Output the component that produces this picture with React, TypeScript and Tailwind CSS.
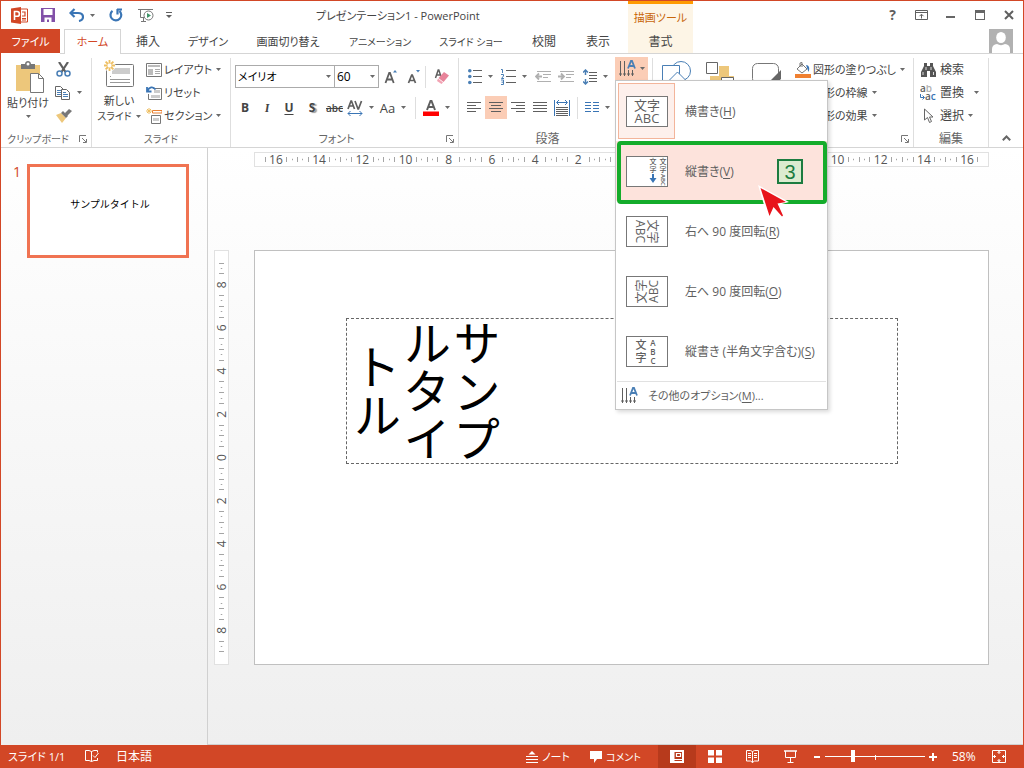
import React from 'react';

const INK = '#5f5f5f';
const BLUE = '#4a7fb5';

function Caret({ light = false }: { light?: boolean }) {
  return (
    <svg width="5" height="3" viewBox="0 0 5 3" className="shrink-0" aria-hidden="true">
      <path d="M0 0h5L2.500 3z" fill={light ? '#999' : '#6a6a6a'} />
    </svg>
  );
}

type ToolProps = { label: string; className?: string; children: React.ReactNode };

function Tool({ label, className = 'w-[22px]', children }: ToolProps) {
  return (
    <button type="button" aria-label={label} className={`flex h-[23px] shrink-0 items-center justify-center gap-1.5 ${className}`}>
      {children}
    </button>
  );
}

function Rule() {
  return <span className="h-[22px] w-px shrink-0 bg-[#dedede]" />;
}

type GroupProps = { title: string; titleSize?: string; launcher?: boolean; className: string; children: React.ReactNode };

function Group({ title, titleSize = 'text-xs', launcher = false, className, children }: GroupProps) {
  return (
    <section aria-label={title} className={`mt-1 flex shrink-0 flex-col border-r border-[#dedede] ${className}`}>
      <div className="flex h-[73px]">{children}</div>
      <div className="flex h-4 items-center">
        <span className={`flex-1 whitespace-nowrap text-center text-[#666] ${titleSize}`}>{title}</span>
        {launcher && (
          <button type="button" aria-label={`${title}の詳細`} className="flex w-4 justify-center">
            <svg width="8" height="8" viewBox="0 0 8 8" fill="none" stroke="#777">
              <path d="M.5 7V.5H7M3 3l4 4M7.500 4v3.500H4" />
            </svg>
          </button>
        )}
      </div>
    </section>
  );
}

type RowButtonProps = { icon: React.ReactNode; text: string; size?: string; caret?: boolean; gap?: string };

function RowButton({ icon, text, size = 'text-[11px]', caret = false, gap = 'gap-0.5' }: RowButtonProps) {
  return (
    <button type="button" className="flex h-[23px] items-center gap-1 whitespace-nowrap">
      <span className={`flex items-center ${gap}`}>
        <span className="flex w-4 justify-center">{icon}</span>
        <span className={size}>{text}</span>
      </span>
      {caret && <Caret />}
    </button>
  );
}

function Lines({ rows, width = 14, color = INK }: { rows: [number, number][]; width?: number; color?: string }) {
  return (
    <svg width={width} height="11" viewBox={`0 0 ${width} 11`} stroke={color}>
      {rows.map(([a, b], i) => (
        <path key={i} d={`M${a} ${i * 3 + 0.5}H${b}`} />
      ))}
    </svg>
  );
}

function TextDirectionIcon() {
  return (
    <svg width="17" height="17" viewBox="0 0 17 17" fill="none">
      <path d="M1.500 1v15M5.500 1v15M9.500 10v6M13.500 10v6" stroke={INK} />
      <path d="M0 14h3M4 14h3M8 14h3M12 14h3" stroke={INK} />
      <path d="M9 8.500L12 1h1l3 7.500M10.200 6h4.600" stroke={BLUE} strokeWidth="1.800" />
    </svg>
  );
}

function TitleBar() {
  return (
    <div className="flex h-7">
      <div className="flex w-[627px] shrink-0 items-center">
        <div className="flex w-[315px] shrink-0 items-center pl-2.5">
          <svg width="17" height="17" viewBox="0 0 17 17" className="mr-[13px]">
            <path d="M9 2h7.500v13H9z" fill="#fff" stroke="#d24726" />
            <path d="M0 1.500L10 0v17L0 15.500z" fill="#d24726" />
            <path d="M3.500 13V4.500H6a2.300 2.300 0 010 4.800H3.500" fill="none" stroke="#fff" strokeWidth="1.600" />
            <path d="M11 5h3v4h-3M11 11.500h4M11 13h4" fill="none" stroke="#d24726" strokeWidth="1.200" />
          </svg>
          <button type="button" aria-label="上書き保存" className="mr-3.5">
            <svg width="14" height="14" viewBox="0 0 14 14">
              <path d="M0 0h14v14H0z" fill="#8250a8" />
              <path d="M2.500 1h9v6h-9zM3.500 9.500h7V14H8v-2.500H6V14H3.500z" fill="#fff" />
            </svg>
          </button>
          <button type="button" aria-label="元に戻す" className="mr-3.5 flex items-center gap-1.5">
            <svg width="15" height="14" viewBox="0 0 15 14" fill="none" stroke="#3a75b5" strokeWidth="2.200">
              <path d="M5.500 1L1.500 5l4 4M2 5h7c3 0 5 1.500 5 4 0 2-1.500 3.500-4 4" />
            </svg>
            <Caret />
          </button>
          <button type="button" aria-label="やり直し" className="mr-[15px]">
            <svg width="14" height="14" viewBox="0 0 14 14" fill="none" stroke="#3a75b5" strokeWidth="2.200">
              <path d="M3.500 2.800A5.400 5.400 0 1010.500 3M8 1.500h5M8.500 1v5.500" />
            </svg>
          </button>
          <button type="button" aria-label="最初から開始" className="mr-3">
            <svg width="16" height="15" viewBox="0 0 16 15" fill="none" stroke="#777">
              <path d="M0 1.500h15M2.500 2v7.500H7M5.500 10v3M3 13.500h5" />
              <circle cx="10.500" cy="7.500" r="4.500" fill="#fff" />
              <path d="M9 5l4 2.500L9 10z" fill="#3f9468" stroke="none" />
            </svg>
          </button>
          <button type="button" aria-label="クイック アクセス ツール バーのカスタマイズ">
            <svg width="6" height="6" viewBox="0 0 6 6"><path d="M0 .5h6" stroke={INK} /><path d="M0 3h6L3 6z" fill={INK} /></svg>
          </button>
        </div>
        <h1 className="whitespace-nowrap pt-0.5 text-[11px] text-[#444]">プレゼンテーション1 - PowerPoint</h1>
      </div>
      <div className="flex w-[65px] shrink-0 items-center justify-center border-t-[3px] border-[#ff9a00] bg-[#fdf5e6] pt-0.5 text-[11px] text-[#c8660a]">描画ツール</div>
      <div className="flex flex-1 items-center justify-end">
        <button type="button" aria-label="ヘルプ" className="w-[29px] text-sm font-bold text-[#5f5f5f]">?</button>
        <button type="button" aria-label="リボンの表示オプション" className="flex w-[29px] justify-center">
          <svg width="13" height="11" viewBox="0 0 13 11" fill="none" stroke={INK}><path d="M.5.500h12v9H.5zM0 2.500h13M6.500 8.500V4.500M4.500 6.200l2-2 2 2" /></svg>
        </button>
        <button type="button" aria-label="最小化" className="flex w-[29px] justify-center"><span className="mt-1 h-0.5 w-[9px] bg-[#666]" /></button>
        <button type="button" aria-label="最大化" className="flex w-[29px] justify-center"><span className="h-2.5 w-2.5 border border-t-[3px] border-[#666]" /></button>
        <button type="button" aria-label="閉じる" className="flex w-[29px] justify-center">
          <svg width="10" height="10" viewBox="0 0 10 10" stroke={INK} strokeWidth="2"><path d="M1 1l8 8M9 1L1 9" /></svg>
        </button>
      </div>
    </div>
  );
}

function TabRow() {
  const tab = 'flex shrink-0 items-center justify-center whitespace-nowrap border-b border-[#d5d5d5] pt-0.5 text-[#444]';
  return (
    <nav className="flex h-[25px]">
      <button type="button" className="mb-px w-[59px] shrink-0 bg-[#d24726] pt-0.5 text-[11px] text-white">ファイル</button>
      <span className="w-1 shrink-0 border-b border-[#d5d5d5]" />
      <button type="button" className="w-[57px] shrink-0 border-x border-t border-[#d5d5d5] bg-white text-[11px] text-[#d24726]">ホーム</button>
      <button type="button" className={`${tab} w-[54px]`}>挿入</button>
      <button type="button" className={`${tab} w-[66px] text-[11px]`}>デザイン</button>
      <button type="button" className={`${tab} w-[94px] text-[11px]`}>画面切り替え</button>
      <button type="button" className={`${tab} w-[90px] text-[10px]`}>アニメーション</button>
      <button type="button" className={`${tab} w-[92px] text-[10px]`}>スライド ショー</button>
      <button type="button" className={`${tab} w-[54px]`}>校閲</button>
      <button type="button" className={`${tab} w-[54px]`}>表示</button>
      <span className="w-[3px] shrink-0 border-b border-[#d5d5d5]" />
      <button type="button" className={`${tab} w-[65px] bg-[#fdf5e6]`}>書式</button>
      <div className="flex flex-1 items-end justify-end border-b border-[#d5d5d5] pr-2.5">
        <svg width="24" height="24" viewBox="0 0 24 24">
          <path d="M0 0h24v24H0z" fill="#b1b1b1" />
          <ellipse cx="12" cy="8.500" rx="4.800" ry="5.500" fill="#fff" />
          <path d="M3 24v-4c0-3 2-4.500 5-5 2.500 1.500 5.500 1.500 8 0 3 .5 5 2 5 5v4z" fill="#fff" />
        </svg>
      </div>
    </nav>
  );
}

function ClipboardGroup() {
  return (
    <Group title="クリップボード" titleSize="text-[10px]" launcher className="w-[91px]">
      <button type="button" className="flex w-[54px] flex-col items-center pt-[3px]">
        <svg width="30" height="32" viewBox="0 0 30 32" className="ml-1">
          <path d="M1 4h24v26H1z" fill="#edc77b" />
          <path d="M6 3h4c0-4 6-4 6 0h4v5H6z" fill="#777" />
          <circle cx="13" cy="3" r="1.500" fill="#fff" />
          <path d="M15.500 12.500h8l5 5v14h-13z" fill="#fff" stroke="#777" />
          <path d="M23.500 12.500v5h5" fill="none" stroke="#777" />
        </svg>
        <span className="mt-0.5 text-[11px] leading-4">貼り付け</span>
        <span className="mt-1"><Caret /></span>
      </button>
      <div className="flex flex-col">
        <Tool label="切り取り" className="w-4">
          <svg width="15" height="15" viewBox="0 0 15 15" fill="none">
            <path d="M3 0l6.500 10M12 0L5.500 10" stroke={INK} strokeWidth="2.200" />
            <circle cx="3.500" cy="11.500" r="2.500" stroke={BLUE} strokeWidth="1.500" />
            <circle cx="11.500" cy="11.500" r="2.500" stroke={BLUE} strokeWidth="1.500" />
          </svg>
        </Tool>
        <Tool label="コピー" className="w-[27px]">
          <svg width="16" height="14" viewBox="0 0 16 14" fill="#fff" stroke="#666">
            <path d="M.5.500h5l3 3v7h-8z" /><path d="M2 4.500h4M2 6.500h4M2 8.500h4" stroke={BLUE} />
            <path d="M6.500 3.500h5l3 3v7h-8z" /><path d="M8 8.500h5M8 10.500h5M8 6.500h3" stroke={BLUE} />
          </svg>
          <Caret />
        </Tool>
        <Tool label="書式のコピー/貼り付け" className="w-[18px]">
          <svg width="16" height="14" viewBox="0 0 16 14">
            <path d="M0 6l5-2 5 5-4 5z" fill="#edc77b" /><path d="M5 4l2-2 5 5-2 2zM9 4l4-4 3 2-4.500 4.500z" fill="#777" />
          </svg>
        </Tool>
      </div>
    </Group>
  );
}

function Sparkle() {
  return <path d="M5.500 0v3.500M5.500 7.500V11M0 5.500h3.500M7.500 5.500H11M1.600 1.600L4 4M7 7l2.400 2.400M9.400 1.600L7 4M4 7L1.600 9.400" stroke="#eebf62" strokeWidth="1.800" />;
}

function SlideGroup() {
  return (
    <Group title="スライド" titleSize="text-[10px]" className="w-[139px]">
      <button type="button" className="flex w-[54px] flex-col items-center pt-0.5">
        <svg width="31" height="29" viewBox="0 0 31 29" fill="none">
          <rect x="2.500" y="4.500" width="27" height="22" rx="1" fill="#fff" stroke="#777" />
          <path d="M8 8h18v6H8z" fill="#ccc" /><path d="M6 19.500h20M6 22.500h20M6 16.500h1" stroke="#999" />
          <circle cx="5.500" cy="5.500" r="6" fill="#fff" /><Sparkle />
        </svg>
        <span className="mt-1 text-[11px] leading-4">新しい</span>
        <span className="flex items-center gap-1 whitespace-nowrap text-[10px] leading-3.5">スライド<Caret /></span>
      </button>
      <div className="flex flex-col items-start">
        <RowButton text="レイアウト" caret icon={<svg width="16" height="14" viewBox="0 0 16 14"><path d="M.5.500h15v13H.5z" fill="#fff" stroke="#777" /><path d="M2 2h12v2H2zM2 6h5v6H2z" fill="#bbb" /><path d="M9 6.500h5M9 8.500h5M9 10.500h5" stroke="#aaa" /></svg>} />
        <RowButton text="リセット" icon={<svg width="16" height="14" viewBox="0 0 16 14" fill="none"><path d="M7 2.500h8.500v11H2.500V8" stroke="#777" /><path d="M8 4h6v3H8zM5 9h9v3H5z" fill="#ccc" /><path d="M1 1v4.500h4.500M1.500 5C3 1 7 0 9.500 3.500" stroke="#3a75b5" strokeWidth="1.800" /></svg>} />
        <RowButton text="セクション" caret icon={<svg width="16" height="16" viewBox="0 0 16 16" fill="none"><path d="M6.500 2.500H16v2.500H6.500z" fill="#fff" stroke="#e88032" /><path d="M5.500 7.500h9v8h-9z" stroke="#777" /><path d="M7 10h6v3H7z" fill="#ccc" /><path d="M3 0v6M0 3h6M1 1l4 4M5 1L1 5" stroke="#eebf62" /></svg>} />
      </div>
    </Group>
  );
}

function FontGroup() {
  const box = 'h-[23px] w-full appearance-none border border-[#ababab] bg-white pl-0.5 text-black outline-none';
  return (
    <Group title="フォント" titleSize="text-[11px]" launcher className="w-[228px]">
      <div className="flex flex-col gap-2 pt-[7px] pl-1">
        <div className="flex items-center">
          <label className="relative w-[100px]">
            <select aria-label="フォント名" className={`${box} text-[11px]`} defaultValue="メイリオ"><option>メイリオ</option></select>
            <span className="pointer-events-none absolute top-2.5 right-1"><Caret /></span>
          </label>
          <label className="relative -ml-px w-[45px]">
            <select aria-label="フォント サイズ" className={box} defaultValue="60"><option>60</option></select>
            <span className="pointer-events-none absolute top-2.5 right-1"><Caret /></span>
          </label>
          <Tool label="フォント サイズの拡大" className="w-6">
            <svg width="14" height="16" viewBox="0 0 14 16" fill="none"><path d="M1.500 14L5.200 4h.8l3.700 10M2.800 10.500h5.700" stroke={INK} strokeWidth="1.800" /><path d="M9 3.500L11 1l2 2.500z" fill={BLUE} /></svg>
          </Tool>
          <Tool label="フォント サイズの縮小">
            <svg width="14" height="16" viewBox="0 0 14 16" fill="none"><path d="M1.500 14l3.200-8h.6l3.200 8M2.800 11.500h4.500" stroke={INK} strokeWidth="1.700" /><path d="M9 1h4l-2 2.500z" fill={BLUE} /></svg>
          </Tool>
          <Rule />
          <Tool label="書式のクリア" className="w-[32px]">
            <svg width="16" height="16" viewBox="0 0 16 16" fill="none"><path d="M1.500 9l2.700-8h.6l2.700 8M2.500 6h4" stroke={INK} strokeWidth="1.500" /><path d="M10 3l5 3.500L9.500 13 4.500 9z" fill="#e8849a" /><path d="M4 9.500l5 4L7.500 15 3 12z" fill="#f2a3b3" /></svg>
          </Tool>
        </div>
        <div className="-ml-px flex items-center">
          <Tool label="太字"><b>B</b></Tool>
          <Tool label="斜体"><b className="font-serif italic">I</b></Tool>
          <Tool label="下線"><b className="underline underline-offset-2">U</b></Tool>
          <Tool label="文字の影" className="w-6"><b className="[text-shadow:2px_1px_1px_#999]">S</b></Tool>
          <Tool label="取り消し線" className="w-[21px]"><span className="text-[10px] font-semibold line-through">abc</span></Tool>
          <Tool label="文字の間隔" className="w-[30px]">
            <svg width="16" height="16" viewBox="0 0 16 16" fill="none"><path d="M1 9l3-8h.5l3 8M2 6h4.500M8 1l3 8h.5l3-8" stroke={INK} strokeWidth="1.700" /><path d="M1 13.500h14M3.500 11L1 13.500 3.500 16M12.500 11l2.500 2.500-2.500 2.500" stroke="#3a75b5" /></svg>
            <Caret />
          </Tool>
          <Tool label="文字種の変換" className="w-9"><span className="text-[13px]">Aa</span><Caret /></Tool>
          <span className="ml-1"><span className="block h-[22px] w-px bg-[#dedede]" /></span>
          <Tool label="フォントの色" className="w-[40px]">
            <svg width="16" height="16" viewBox="0 0 16 16" fill="none"><path d="M4 10L7.500 1h1L12 10M5.500 7h5" stroke={INK} strokeWidth="2" /><path d="M0 11.500h16V16H0z" fill="red" /></svg>
            <Caret />
          </Tool>
        </div>
      </div>
    </Group>
  );
}

function ParagraphGroup() {
  return (
    <Group title="段落" launcher className="w-[194px]">
      <div className="flex w-[156px] shrink-0 flex-col gap-2 pt-[7px]">
        <div className="flex items-center pl-1">
          <Tool label="箇条書き" className="w-[34px]">
            <svg width="14" height="16" viewBox="0 0 14 16"><path d="M5 1.500h9M5 7.500h9M5 13.500h9" stroke={INK} /><circle cx="1.800" cy="1.800" r="1.800" fill={BLUE} /><circle cx="1.800" cy="7.500" r="1.800" fill={BLUE} /><circle cx="1.800" cy="13.500" r="1.800" fill={BLUE} /></svg>
            <Caret />
          </Tool>
          <Tool label="段落番号" className="w-[34px]">
            <svg width="15" height="17" viewBox="0 0 15 17" fill="none"><path d="M5 2.500h10M5 8.500h10M5 14.500h10" stroke={INK} /><path d="M0 1.500h1.500V5M0 6.500h2.500V8L.5 10.500H3M0 12h2.500v4.500H0M.5 14.200h2" stroke={BLUE} /></svg>
            <Caret />
          </Tool>
          <Tool label="インデントを減らす" className="w-6">
            <svg width="16" height="12" viewBox="0 0 16 12" fill="none" stroke="#b0b0b0"><path d="M2 .5h14M8 3.500h8M8 6.500h5M2 10.500h14" /><path d="M1 5.500h6M4 2.500L1 5.500l3 3" strokeWidth="1.800" /></svg>
          </Tool>
          <Tool label="インデントを増やす">
            <svg width="16" height="12" viewBox="0 0 16 12" fill="none" stroke="#b0b0b0"><path d="M2 .5h14M8 3.500h8M8 6.500h5M2 10.500h14" /><path d="M0 5.500h6M3 2.500l3 3-3 3" strokeWidth="1.800" /></svg>
          </Tool>
          <Tool label="行間" className="w-9">
            <svg width="14" height="16" viewBox="0 0 14 16" fill="none"><path d="M6 3.500h8M6 6.500h8M6 9.500h8M6 12.500h8" stroke={INK} /><path d="M2.500 1v5M0 3.500L2.500 1 5 3.500M2.500 10v5M0 12.500L2.500 15 5 12.500" stroke={BLUE} strokeWidth="1.500" /></svg>
            <Caret />
          </Tool>
        </div>
        <div className="flex items-center pl-1">
          <Tool label="左揃え"><Lines rows={[[0, 14], [0, 9], [0, 14], [0, 9]]} /></Tool>
          <Tool label="中央揃え" className="w-[22px] bg-[#fbcdb6]"><Lines rows={[[0, 14], [2, 12], [0, 14], [2, 12]]} /></Tool>
          <Tool label="右揃え"><Lines rows={[[0, 14], [5, 14], [0, 14], [5, 14]]} /></Tool>
          <Tool label="両端揃え"><Lines rows={[[0, 14], [0, 14], [0, 14], [0, 14]]} /></Tool>
          <Tool label="均等割り付け">
            <svg width="16" height="16" viewBox="0 0 16 16" fill="none"><path d="M.5 0v16M15.500 0v16M3 2.500h10M5 0L2.500 2.500 5 5M11 0l2.500 2.500L11 5" stroke="#3a75b5" /><path d="M2 7.500h12M2 9.500h12M2 11.500h12M2 13.500h12M2 15.500h12" stroke={INK} /></svg>
          </Tool>
          <span className="ml-1"><span className="block h-[22px] w-px bg-[#dedede]" /></span>
          <Tool label="段組み" className="w-[38px]">
            <svg width="14" height="11" viewBox="0 0 14 11" stroke="#3a75b5"><path d="M0 .5h6M8 .5h6M0 3.500h6M8 3.500h6M0 6.500h6M8 6.500h6M0 9.500h6M8 9.500h6" /></svg>
            <Caret />
          </Tool>
        </div>
      </div>
      <div className="relative -mt-px h-[23px] w-[33px] shrink-0">
        <button type="button" aria-label="文字列の方向" className="flex h-full w-full items-center justify-center gap-1 bg-[#fbcdb6]">
          <TextDirectionIcon />
          <Caret />
        </button>
        <DirectionMenu />
      </div>
    </Group>
  );
}

function MenuIcon({ kind }: { kind: string }) {
  return (
    <svg width="42" height="31" viewBox="0 0 42 31" fill={INK} className="shrink-0">
      <rect x=".5" y=".5" width="41" height="30" fill="#fff" stroke="#777" />
      {kind === 'H' && (
        <g fontSize="13" textAnchor="middle"><text x="21" y="14">文字</text><text x="21" y="27">ABC</text></g>
      )}
      {kind === 'V' && (
        <g fontSize="7" fontWeight="500" textAnchor="middle">
          <text x="27" y="8">文</text><text x="27" y="16">字</text>
          <text x="37" y="8">文</text><text x="37" y="16">字</text>
          <text fontSize="6" fontWeight="600" textAnchor="start" transform="translate(35 18) rotate(90)">ABC</text>
          <path d="M26 18h2v4h2.500L27 27l-3.500-5H26z" fill="#3a75b5" />
        </g>
      )}
      {kind === 'R' && (
        <g fontSize="12" textAnchor="middle" transform="translate(21 15.500) rotate(90)"><text x="0" y="-1">文字</text><text x="0" y="11">ABC</text></g>
      )}
      {kind === 'O' && (
        <g fontSize="12" textAnchor="middle" transform="translate(21 15.500) rotate(-90)"><text x="0" y="-1">文字</text><text x="0" y="11">ABC</text></g>
      )}
      {kind === 'S' && (
        <g textAnchor="middle" fontSize="11" fontWeight="500"><text x="15" y="13">文</text><text x="15" y="26">字</text><g fontSize="8" fontWeight="600"><text x="27" y="10">A</text><text x="27" y="19">B</text><text x="27" y="28">C</text></g></g>
      )}
    </svg>
  );
}

const directions = [
  { key: 'H', text: '横書き' },
  { key: 'V', text: '縦書き' },
  { key: 'R', text: '右へ 90 度回転' },
  { key: 'O', text: '左へ 90 度回転' },
  { key: 'S', text: '縦書き (半角文字含む)' },
];

function DirectionMenu() {
  return (
    <div role="menu" className="absolute top-full left-0 z-20 w-[213px] border border-[#c6c6c6] bg-white text-[#5f5f5f] shadow-[2px_2px_4px_rgba(0,0,0,0.15)]">
      {directions.map(({ key, text }) => (
        <button key={key} type="button" role="menuitem" className={`relative flex h-[60px] w-full items-center gap-2.5 whitespace-nowrap pl-0.5 text-left ${key === 'V' ? 'bg-[#fde3dc]' : ''}`}>
          <span className={`flex h-14 w-[57px] shrink-0 items-center justify-center border ${key === 'H' ? 'border-[#f3b59b] bg-[#fdf0ec]' : 'border-transparent'}`}>
            <MenuIcon kind={key} />
          </span>
          <span className="pt-0.5">{text}(<u className="underline-offset-2">{key}</u>)</span>
          {key === 'V' && (
            <>
              <span className="absolute top-0 right-0 left-px h-[63px] rounded-sm border-4 border-[#14ac2b]" />
              <span className="absolute top-[18px] right-6 flex h-[25px] w-[26px] items-center justify-center border-2 border-[#1c7c40] bg-[#dcebd0] font-['Liberation_Sans',sans-serif] text-xl leading-none text-[#1c7c40]">3</span>
              <svg width="34" height="34" viewBox="0 0 34 34" className="absolute top-11 left-[141px] z-10">
                <path d="M1 0l31 17-9 2.500 8 10-5 4.500-9-9.500L11 33z" fill="#fff" />
                <path d="M3.500 3L29 17l-8.500 1.500 5.500 12-1 1-8.500-9.500-4 9z" fill="#e8141c" />
              </svg>
            </>
          )}
        </button>
      ))}
      <button type="button" role="menuitem" className="mx-px flex h-7 w-[209px] items-center gap-2.5 border-t border-[#e1e1e1] pl-1">
        <TextDirectionIcon />
        <span className="whitespace-nowrap text-[11px]">その他のオプション(<u className="underline-offset-2">M</u>)...</span>
      </button>
    </div>
  );
}

function DrawingGroup() {
  return (
    <Group title="図形描画" launcher className="w-[261px]">
      <Tool label="図形" className="w-12 pt-1.5">
        <svg width="30" height="24" viewBox="0 0 30 24" fill="#fff" stroke={BLUE}><circle cx="19" cy="10" r="9.500" /><path d="M.5 4.500h17v17H.5z" /><path d="M15.500 11l8 8-8 8-8-8z" /></svg>
      </Tool>
      <Tool label="配置" className="w-[38px] pt-1.5">
        <svg width="28" height="24" viewBox="0 0 28 24"><path d="M.5 1.500h11v11H.5z" fill="#fff" stroke="#666" /><path d="M13 5h10v10h5v9H4V15h9z" fill="#edc77b" /><path d="M15.500 16.500h12v10h-12z" fill="#fff" stroke="#666" /></svg>
      </Tool>
      <Tool label="クイック スタイル" className="ml-1 w-12 pt-1.5">
        <svg width="30" height="24" viewBox="0 0 30 24"><rect x=".5" y="2.500" width="26" height="20" rx="5" fill="#fff" stroke="#777" /><path d="M18 20L29 9v9l-7 6z" fill="#666" /></svg>
      </Tool>
      <div className="flex flex-1 flex-col items-start pl-1">
        <RowButton text="図形の塗りつぶし" caret icon={<svg width="16" height="16" viewBox="0 0 16 16" fill="none"><path d="M2 7l5-5 5 5-5 4z" fill="#fff" stroke="#777" /><path d="M5 5V1l2-.5V5" stroke="#777" /><path d="M11 3c3 0 4 3 2.500 7z" fill="#3a75b5" /><path d="M0 12h16v4H0z" fill="#f08030" /></svg>} />
        <RowButton text="図形の枠線" caret icon={<svg width="16" height="14" viewBox="0 0 16 14"><path d="M.5.500h12v9H.5z" fill="none" stroke="#3a75b5" /></svg>} />
        <RowButton text="図形の効果" caret icon={<svg width="16" height="14" viewBox="0 0 16 14"><path d="M1 1h11v9H1z" fill="#cfe0f0" stroke="#3a75b5" /></svg>} />
      </div>
    </Group>
  );
}

function EditingGroup() {
  return (
    <Group title="編集" className="w-[75px]">
      <div className="flex flex-col items-start pl-1.5">
        <RowButton text="検索" size="text-xs" gap="gap-1" icon={<svg width="15" height="14" viewBox="0 0 15 14" fill="#555"><path d="M3 0h3v3h3V0h3v3l3 6v5H9V8H6v6H0V9l3-6z" /><path d="M2 9v3M12.500 9v3M5 4v3M10 4v3" stroke="#fff" strokeWidth=".8" /></svg>} />
        <button type="button" className="flex h-[23px] items-center gap-1 whitespace-nowrap">
          <svg width="16" height="16" viewBox="0 0 16 16" fontSize="10" fontWeight="600" fill={INK}>
            <text x="0" y="7">a<tspan fill="#b0b0b0">b</tspan></text>
            <text x="5" y="15">a<tspan fill="#3a75b5">c</tspan></text>
            <path d="M.5 9v3.500H4M2.500 10.500l2 2-2 2" fill="none" stroke="#3a75b5" />
          </svg>
          <span>置換</span>
          <span className="ml-1.5"><Caret /></span>
        </button>
        <RowButton text="選択" size="text-xs" gap="gap-1" caret icon={<svg width="11" height="16" viewBox="0 0 11 16"><path d="M1.500 1v11l3-2.500 2 5 2-1-2-4.500h3.500z" fill="#fff" stroke="#666" /></svg>} />
      </div>
    </Group>
  );
}

function Ruler({ vertical = false }: { vertical?: boolean }) {
  const length = vertical ? 413 : 733;
  const limit = vertical ? 9 : 16.5;
  const unit = 21.6;
  const marks: React.ReactNode[] = [];
  for (let q = -limit * 4; q <= limit * 4; q++) {
    const value = Math.abs(q / 4);
    const pos = length / 2 + (q / 4) * unit;
    if (value % 2 === 0) {
      marks.push(
        <text key={q} fontSize="12" fill="#555" textAnchor="middle" transform={vertical ? `translate(11 ${pos}) rotate(-90)` : `translate(${pos} 11)`}>{value}</text>,
      );
    } else if (value % 2 > 0.25 && value % 2 < 1.75) {
      const half = value % 0.5 === 0 ? 2.5 : 0.75;
      const p = Math.floor(pos) + 0.5;
      marks.push(<path key={q} stroke="#a5a5a5" d={vertical ? `M${6.5 - half} ${p}h${half * 2}` : `M${p} ${6.5 - half}v${half * 2}`} />);
    }
  }
  return (
    <svg viewBox={vertical ? '0 0 13 413' : '0 0 733 13'} className={`border border-[#e1e1e1] bg-white ${vertical ? 'h-full w-[15px]' : 'h-[15px] w-full'}`}>{marks}</svg>
  );
}

function Workspace() {
  return (
    <main className="flex flex-1 bg-linear-to-b from-white to-[#efefef]">
      <aside className="flex w-[207px] shrink-0 items-start border-r border-[#d0d0d0] pt-4 pl-3">
        <span className="w-3.5 shrink-0 text-sm leading-4 text-[#d24726]">1</span>
        <div className="flex h-[94px] w-[162px] items-start justify-center border-[3px] border-[#f07352] bg-white pt-[29px] pl-1 text-[10px] text-black [font-feature-settings:normal]">サンプルタイトル</div>
      </aside>
      <div className="min-w-0 flex-1 border-b border-[#d0d0d0] pt-1 pr-[34px] pl-1.5">
        <div className="grid grid-cols-[15px_1fr] gap-x-[25px]">
          <span />
          <Ruler />
          <div className="mt-[83px]"><Ruler vertical /></div>
          <div className="relative mt-[83px] aspect-[735/415] border border-[#c0c0c0] bg-white">
            <div className="absolute top-[16.300%] left-[12.400%] flex h-[35.200%] w-[75.300%] items-center border border-dashed border-[#666] pl-0.5">
              <p className="h-36 text-center text-5xl leading-[50px] text-black [font-feature-settings:normal] [writing-mode:vertical-rl]">サンプルタイトル</p>
            </div>
          </div>
        </div>
      </div>
    </main>
  );
}

function StatusBar() {
  return (
    <footer className="flex h-[23px] shrink-0 items-center whitespace-nowrap bg-[#d24726] text-white">
      <span className="w-[84px] pl-[7px] text-[11px]">スライド 1/1</span>
      <button type="button" aria-label="スペル チェック" className="w-[31px]">
        <svg width="14" height="13" viewBox="0 0 14 13" fill="none" stroke="#fff"><path d="M6.500 11.500L4 10.500H.5V.5H4l2.500 1zM6.500 1.500L9 .5h3.500v2M6.500 11.500l2.500-1h3.500V8M8 5.500l2 2L13.500 3" /></svg>
      </button>
      <button type="button">日本語</button>
      <div className="ml-auto flex h-full items-center">
        <button type="button" className="flex w-16 items-center gap-1 text-[11px]">
          <svg width="12" height="12" viewBox="0 0 12 12" stroke="#fff"><path d="M6 0l3.500 3.500h-7z" fill="#fff" stroke="none" /><path d="M0 5.500h12M0 8.500h12M0 11.500h12" /></svg>
          ノート
        </button>
        <button type="button" className="flex w-[68px] items-center gap-1 text-[10px]">
          <svg width="12" height="12" viewBox="0 0 12 12" fill="#fff"><path d="M0 0h12v8H7l-3 4V8H0z" /></svg>
          コメント
        </button>
        <button type="button" aria-label="標準" className="flex h-full w-[38px] items-center justify-center bg-[#b73a1c]">
          <svg width="14" height="13" viewBox="0 0 14 13" fill="none" stroke="#fff"><path d="M1 1h12v11H1z" strokeWidth="2" /><path d="M3 1v11" strokeWidth="3" /><path d="M6.500 3.500h4v3h-4zM4 9.500h8" strokeWidth="1.200" /></svg>
        </button>
        <button type="button" aria-label="スライド一覧" className="flex w-[38px] justify-center">
          <svg width="14" height="13" viewBox="0 0 14 13" fill="#fff"><path d="M0 0h6v5.500H0zM8 0h6v5.500H8zM0 7.500h6V13H0zM8 7.500h6V13H8z" /></svg>
        </button>
        <button type="button" aria-label="閲覧表示" className="flex w-[37px] justify-center">
          <svg width="13" height="13" viewBox="0 0 13 13" fill="none" stroke="#fff"><path d="M6.500 12.500V1.500L4.500.5h-4v10.500h4l2 1.500 2-1.500h4V.5h-4l-2 1M2 3.500h3M2 5.500h3M2 7.500h3M8 3.500h3M8 5.500h3M8 7.500h3" /></svg>
        </button>
        <button type="button" aria-label="スライド ショー" className="flex w-[39px] justify-center">
          <svg width="13" height="13" viewBox="0 0 13 13" fill="none" stroke="#fff"><path d="M0 1h13" strokeWidth="1.500" /><path d="M1.500 1v6.500h10V1M6.500 8v4M3.500 12.500h6" /></svg>
        </button>
        <button type="button" aria-label="縮小" className="ml-1 flex w-[11px]"><span className="h-0.5 w-1.5 bg-white" /></button>
        <span className="relative flex h-3.5 w-[100px] items-center">
          <span className="absolute top-[5px] left-1/2 h-[5px] w-px bg-white" />
          <input type="range" aria-label="ズーム" min="10" max="190" defaultValue="58" className="relative h-3.5 w-full appearance-none bg-transparent [&::-webkit-slider-runnable-track]:h-px [&::-webkit-slider-runnable-track]:bg-white [&::-webkit-slider-thumb]:-mt-1.5 [&::-webkit-slider-thumb]:h-3 [&::-webkit-slider-thumb]:w-1 [&::-webkit-slider-thumb]:appearance-none [&::-webkit-slider-thumb]:bg-white" />
        </span>
        <button type="button" aria-label="拡大" className="ml-1 flex w-[23px]">
          <svg width="8" height="8" viewBox="0 0 8 8"><path d="M4 0v8M0 4h8" stroke="#fff" strokeWidth="2" /></svg>
        </button>
        <span className="w-10">58%</span>
        <button type="button" aria-label="ウィンドウに合わせる" className="mr-[17px]">
          <svg width="14" height="13" viewBox="0 0 14 13" fill="none" stroke="#fff"><path d="M.5.500h13v12H.5zM7 1v3M5.500 3L7 1.500 8.500 3M7 12V9M5.500 10L7 11.500 8.500 10M1 6.500h3M3 5L1.500 6.500 3 8M13 6.500h-3M11 5l1.500 1.500L11 8" /></svg>
        </button>
      </div>
    </footer>
  );
}

export default function App() {
  return (
    <div className="flex min-h-screen flex-col border border-b-0 border-[#d24726] bg-white font-['Open_Sans','Noto_Sans_CJK_JP',sans-serif] text-xs leading-4 text-[#444] [font-feature-settings:'palt']">
      <TitleBar />
      <TabRow />
      <div className="flex h-[94px] border-b border-[#d5d5d5]">
        <ClipboardGroup />
        <SlideGroup />
        <FontGroup />
        <ParagraphGroup />
        <DrawingGroup />
        <EditingGroup />
        <button type="button" aria-label="リボンを折りたたむ" className="flex flex-1 items-end justify-center pb-1.5">
          <svg width="9" height="6" viewBox="0 0 9 6" fill="none" stroke="#666" strokeWidth="2"><path d="M.8 5.200L4.500 1.500l3.700 3.700" /></svg>
        </button>
      </div>
      <Workspace />
      <StatusBar />
    </div>
  );
}
